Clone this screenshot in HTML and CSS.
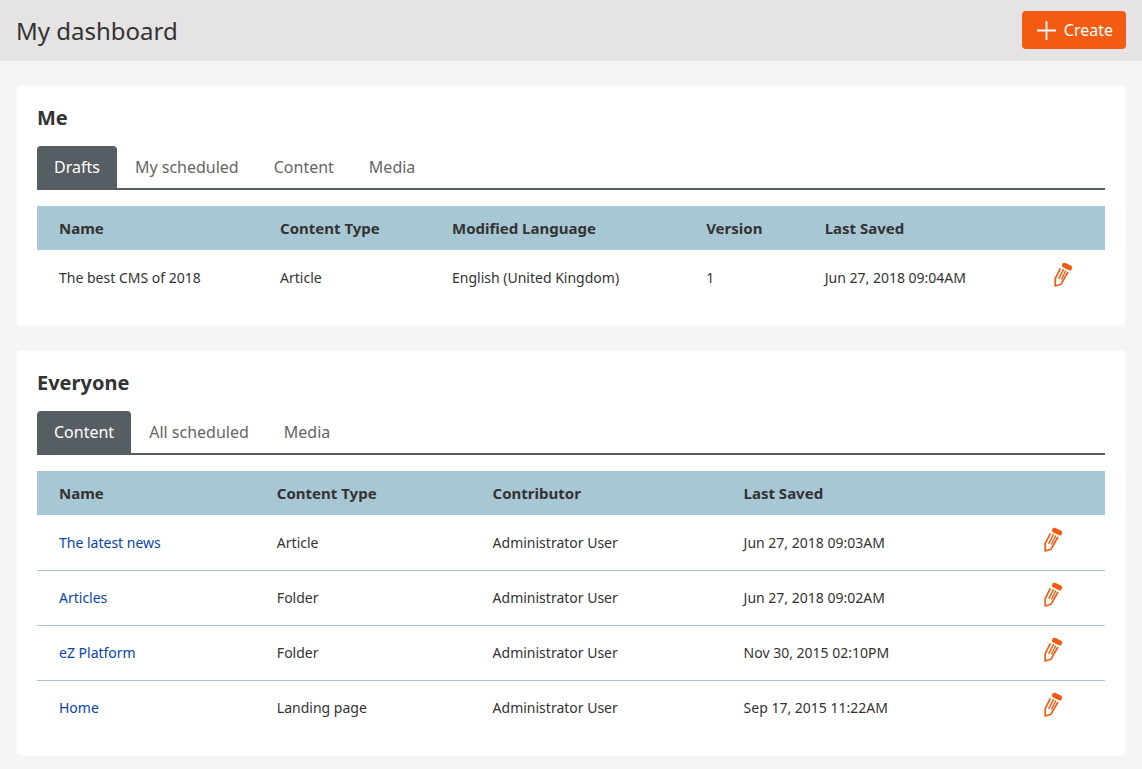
FILE: index.html
```html
<!DOCTYPE html>
<html lang="en">
<head>
<meta charset="utf-8">
<title>My dashboard</title>
<link rel="stylesheet" href="styles.css">
</head>
<body>
<svg class="sprite" aria-hidden="true">
  <symbol id="pencil" viewBox="0 0 20 26">
    <path d="M8.8 1.6Q9.7 .2 11.6 .9L16.8 3.4Q18.7 4.5 18.2 6L17.5 7.6Q16.7 8.9 15 8.2L8.8 5.2Q7.4 4.3 7.9 3.2Z" fill="currentColor"/>
    <path d="M6.4 6.4L1.2 16.6V24L7 22.2L14 10" fill="none" stroke="currentColor" stroke-width="1.7" stroke-linejoin="round"/>
    <path d="M9.4 7.6L4.9 16.4M11.6 9L7.6 17" fill="none" stroke="currentColor" stroke-width="1.4" stroke-linecap="round"/>
  </symbol>
</svg>
<header class="topbar">
  <h1 class="title">My dashboard</h1>
  <button class="create" type="button">
    <svg class="plus" viewBox="0 0 19 19" aria-hidden="true"><path d="M9.5 .5V18.5M.5 9.5H18.5" stroke="currentColor" stroke-width="1.8" stroke-linecap="round"/></svg>
    Create
  </button>
</header>
<main class="dashboard">
  <section class="card">
    <h2 class="card-title">Me</h2>
    <nav class="tabs">
      <a class="tab active" href="#drafts">Drafts</a>
      <a class="tab" href="#my-scheduled">My scheduled</a>
      <a class="tab" href="#my-content">Content</a>
      <a class="tab" href="#my-media">Media</a>
    </nav>
    <table class="grid drafts">
      <colgroup><col class="c-name"><col class="c-type"><col class="c-lang"><col class="c-version"><col class="c-saved"><col></colgroup>
      <thead><tr><th>Name</th><th>Content Type</th><th>Modified Language</th><th>Version</th><th>Last Saved</th><th></th></tr></thead>
      <tbody>
        <tr><td>The best CMS of 2018</td><td>Article</td><td>English (United Kingdom)</td><td>1</td><td>Jun 27, 2018 09:04AM</td><td><button class="edit" type="button" aria-label="Edit"><svg class="pencil"><use href="#pencil"/></svg></button></td></tr>
      </tbody>
    </table>
  </section>
  <section class="card">
    <h2 class="card-title">Everyone</h2>
    <nav class="tabs">
      <a class="tab active" href="#content">Content</a>
      <a class="tab" href="#scheduled">All scheduled</a>
      <a class="tab" href="#media">Media</a>
    </nav>
    <table class="grid everyone">
      <colgroup><col class="c-name"><col class="c-type"><col class="c-user"><col class="c-saved"><col></colgroup>
      <thead><tr><th>Name</th><th>Content Type</th><th>Contributor</th><th>Last Saved</th><th></th></tr></thead>
      <tbody>
        <tr><td><a class="link" href="#news">The latest news</a></td><td>Article</td><td>Administrator User</td><td>Jun 27, 2018 09:03AM</td><td><button class="edit" type="button" aria-label="Edit"><svg class="pencil"><use href="#pencil"/></svg></button></td></tr>
        <tr><td><a class="link" href="#articles">Articles</a></td><td>Folder</td><td>Administrator User</td><td>Jun 27, 2018 09:02AM</td><td><button class="edit" type="button" aria-label="Edit"><svg class="pencil"><use href="#pencil"/></svg></button></td></tr>
        <tr><td><a class="link" href="#ez">eZ Platform</a></td><td>Folder</td><td>Administrator User</td><td>Nov 30, 2015 02:10PM</td><td><button class="edit" type="button" aria-label="Edit"><svg class="pencil"><use href="#pencil"/></svg></button></td></tr>
        <tr><td><a class="link" href="#home">Home</a></td><td>Landing page</td><td>Administrator User</td><td>Sep 17, 2015 11:22AM</td><td><button class="edit" type="button" aria-label="Edit"><svg class="pencil"><use href="#pencil"/></svg></button></td></tr>
      </tbody>
    </table>
  </section>
</main>
</body>
</html>
```
FILE: styles.css
```css
* {
  box-sizing: border-box;
}

body {
  margin: 0;
  background: #f5f5f5;
  color: #333;
  font: 16px/24px "Noto Sans", sans-serif;
}

.sprite {
  display: none;
}

.topbar {
  display: flex;
  align-items: center;
  justify-content: space-between;
  padding: 11px 16px 12px;
  background: #e5e3e4;
}

.title {
  margin: 0;
  padding-top: 2px;
  font-size: 24px;
  line-height: 36px;
  font-weight: 400;
}

.create {
  display: flex;
  align-items: center;
  gap: 8px;
  padding: 7px 13px 7px 15px;
  border: 0;
  border-radius: 4px;
  background: #f45b12;
  color: #fff;
  font: inherit;
}

.plus {
  width: 19px;
  height: 19px;
}

.dashboard {
  display: flex;
  flex-direction: column;
  gap: 24px;
  padding: 24px 16px 12px;
}

.card {
  padding: 18px 20px 20px;
  border: 1px solid #fafafa;
  border-radius: 4px;
  background: #fff;
}

.card-title {
  margin: 0 0 14px;
  font-size: 20px;
  line-height: 28px;
  font-weight: 700;
}

.tabs {
  display: flex;
  gap: 1px;
  margin-bottom: 16px;
  border-bottom: 2px solid #565d63;
}

.tab {
  padding: 9px 17px;
  border-radius: 4px 4px 0 0;
  color: #666;
  text-decoration: none;
}

.tab.active {
  background: #565d63;
  color: #fff;
}

.grid {
  width: 100%;
  table-layout: fixed;
  border-collapse: separate;
  border-spacing: 0;
  font-size: 14px;
  line-height: 20px;
}

.grid th {
  height: 44px;
  padding: 0 0 0 22px;
  background: #a8c7d5;
  font-size: 15px;
  text-align: left;
}

.grid td {
  height: 55px;
  padding: 0 0 0 22px;
}

.grid tr + tr td {
  border-top: 1px solid #a8c7d5;
}

.drafts .c-name { width: 20.7%; }
.drafts .c-type { width: 16.1%; }
.drafts .c-lang { width: 23.8%; }
.drafts .c-version { width: 11.1%; }
.drafts .c-saved { width: 21.5%; }

.everyone .c-name { width: 20.4%; }
.everyone .c-type { width: 20.2%; }
.everyone .c-user { width: 23.5%; }
.everyone .c-saved { width: 28.1%; }

.edit {
  display: block;
  padding: 0 0 6px;
  border: 0;
  background: none;
  color: #f45b12;
}

.pencil {
  display: block;
  width: 20px;
  height: 26px;
}

.link {
  color: #0645ad;
  text-decoration: none;
}
```
